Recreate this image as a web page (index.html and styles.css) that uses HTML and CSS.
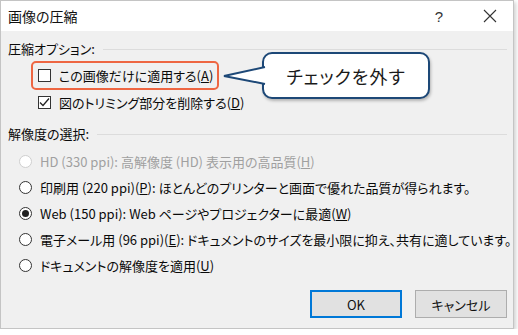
FILE: index.html
```html
<!DOCTYPE html>
<html lang="ja">
<head>
  <meta charset="UTF-8">
  <title>画像の圧縮</title>
  <link rel="stylesheet" href="styles.css">
</head>
<body>

  <div class="dialog">
    <div class="titlebar">
      <span class="title">画像の圧縮</span>
      <span class="help">?</span>
      <svg class="close" width="14" height="14" viewBox="0 0 14 14">
        <path d="M1 1 L13 13 M13 1 L1 13" stroke="#333" stroke-width="1.1" fill="none"/>
      </svg>
    </div>

    <div class="body">
      <div class="group-head"><span>圧縮オプション:</span></div>

      <div class="check-row highlight">
        <span class="box"></span>
        <span>この画像だけに適用する(<u>A</u>)</span>
      </div>
      <div class="check-row">
        <span class="box">
          <svg width="11" height="11" viewBox="0 0 11 11">
            <path d="M1 5.5 L4 8.5 L10 1.5" stroke="#222" stroke-width="1.3" fill="none"/>
          </svg>
        </span>
        <span>図のトリミング部分を削除する(<u>D</u>)</span>
      </div>

      <div class="group-head second"><span>解像度の選択:</span></div>

      <div class="radios">
        <div class="radio-row disabled">
          <span class="radio"></span>
          <span>HD (330 ppi): 高解像度 (HD) 表示用の高品質(<u>H</u>)</span>
        </div>
        <div class="radio-row">
          <span class="radio"></span>
          <span>印刷用 (220 ppi)(<u>P</u>): ほとんどのプリンターと画面で優れた品質が得られます。</span>
        </div>
        <div class="radio-row">
          <span class="radio checked"></span>
          <span>Web (150 ppi): Web ページやプロジェクターに最適(<u>W</u>)</span>
        </div>
        <div class="radio-row">
          <span class="radio"></span>
          <span>電子メール用 (96 ppi)(<u>E</u>): ドキュメントのサイズを最小限に抑え、共有に適しています。</span>
        </div>
        <div class="radio-row">
          <span class="radio"></span>
          <span>ドキュメントの解像度を適用(<u>U</u>)</span>
        </div>
      </div>

      <div class="buttons">
        <button class="btn default">OK</button>
        <button class="btn">キャンセル</button>
      </div>
    </div>

    <!-- callout over the dialog -->
    <div class="callout">チェックを外す</div>
    <svg class="callout-tip" width="44" height="30" viewBox="0 0 44 30">
      <path d="M43 6 L2 15 L43 23" stroke="#1d4877" stroke-width="2" fill="#fff" stroke-linejoin="miter"/>
    </svg>
  </div>

</body>
</html>
```

FILE: styles.css
```css
* {
  margin: 0;
  padding: 0;
  box-sizing: border-box;
}

body {
  font-family: "Noto Sans CJK JP", "Noto Sans", sans-serif;
  font-size: 13px;
  font-feature-settings: "palt";
  color: #0a0a0a;
  background: #fff;
}

.dialog {
  position: relative;
  width: 514px;
  height: 329px;
  background: #f0f0f0;
  border: 1px solid #c4c4c4;
  box-shadow: 2px 2px 4px rgba(0, 0, 0, 0.18);
}

.titlebar {
  display: flex;
  align-items: center;
  height: 30px;
  background: #fff;
  padding-left: 7px;
}

.title {
  flex: 1;
  font-size: 14px;
  color: #111;
}

.help {
  font-family: "Liberation Sans", sans-serif;
  font-size: 15px;
  color: #333;
  margin-right: 40px;
}

.close {
  margin-right: 16px;
}

.body {
  padding: 9px 6px 0 7px;
}

.group-head {
  display: flex;
  align-items: center;
  gap: 8px;
  height: 18px;
  line-height: 18px;
}

.group-head::after {
  content: '';
  flex: 1;
  border-top: 1px solid #dcdcdc;
}

.group-head.second {
  margin-top: 13px;
}

.check-row {
  display: flex;
  align-items: center;
  gap: 8px;
  height: 20px;
  margin-left: 30px;
  margin-top: 2px;
}

.check-row.highlight {
  width: 188px;
  height: 29px;
  margin-left: 23px;
  margin-top: 3px;
  padding-left: 5px;
  border: 2px solid #ee6642;
  border-radius: 5px;
}

.box {
  flex-shrink: 0;
  width: 13px;
  height: 13px;
  border: 1px solid #333;
  background: #fff;
  display: flex;
  align-items: center;
  justify-content: center;
}

.radios {
  margin-top: 5px;
  padding-left: 11px;
}

.radio-row {
  display: flex;
  align-items: center;
  gap: 8px;
  height: 26px;
  white-space: nowrap;
}

.radio {
  flex-shrink: 0;
  width: 13px;
  height: 13px;
  border: 1px solid #333;
  border-radius: 50%;
  background: #fff;
  display: flex;
  align-items: center;
  justify-content: center;
}

.radio.checked::after {
  content: '';
  width: 7px;
  height: 7px;
  border-radius: 50%;
  background: #222;
}

.disabled {
  color: #a0a0a0;
}

.disabled .radio {
  border-color: #cfcfcf;
}

.buttons {
  display: flex;
  justify-content: flex-end;
  gap: 13px;
  margin-top: 12px;
}

.btn {
  width: 92px;
  height: 28px;
  font-family: inherit;
  font-size: 13px;
  font-feature-settings: "palt";
  color: #111;
  background: #e1e1e1;
  border: 1px solid #adadad;
}

.btn.default {
  border: 2px solid #0078d7;
}

.callout {
  position: absolute;
  left: 261px;
  top: 51px;
  width: 168px;
  height: 47px;
  background: #fff;
  border: 2px solid #1d4877;
  border-radius: 10px;
  box-shadow: 1px 2px 3px rgba(0, 0, 0, 0.25);
  font-size: 18px;
  letter-spacing: 1px;
  display: flex;
  align-items: center;
  justify-content: center;
  color: #1a1a1a;
}

.callout-tip {
  position: absolute;
  left: 221px;
  top: 60px;
}
```
